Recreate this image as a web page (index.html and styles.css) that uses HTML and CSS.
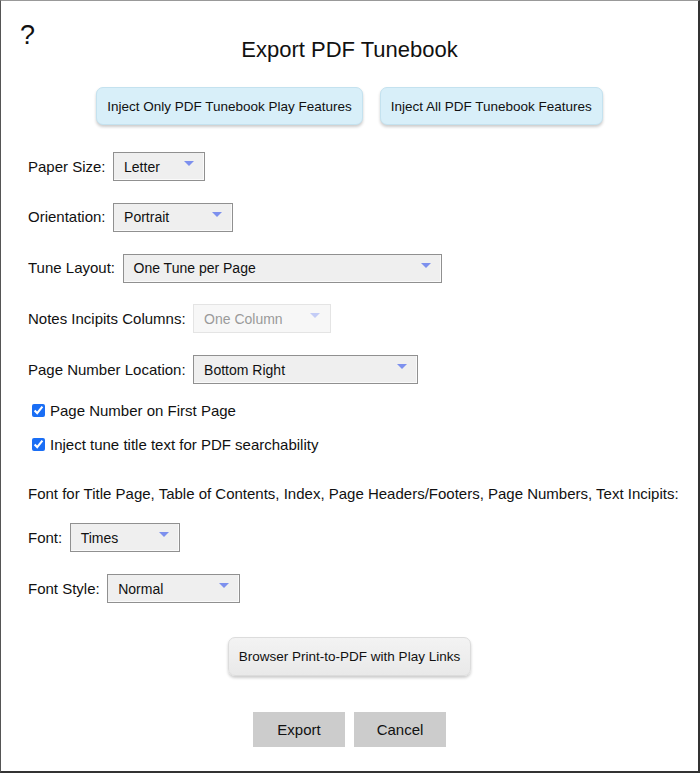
FILE: index.html
```html
<!DOCTYPE html>
<html>
<head>
<meta charset="utf-8">
<link rel="stylesheet" href="styles.css">
</head>
<body>
<div class="dialog">
  <div class="help">?</div>
  <h1 class="title">Export PDF Tunebook</h1>
  <div class="inject-row">
    <button class="btn-blue">Inject Only PDF Tunebook Play Features</button>
    <button class="btn-blue">Inject All PDF Tunebook Features</button>
  </div>

  <div class="fields">
    <div class="field">
      <span class="label">Paper Size:</span>
      <div class="select w-paper"><span>Letter</span><svg class="arrow" width="10" height="5" viewBox="0 0 10 5"><polygon points="0,0 10,0 5,5"/></svg></div>
    </div>
    <div class="field">
      <span class="label">Orientation:</span>
      <div class="select w-orient"><span>Portrait</span><svg class="arrow" width="10" height="5" viewBox="0 0 10 5"><polygon points="0,0 10,0 5,5"/></svg></div>
    </div>
    <div class="field">
      <span class="label">Tune Layout:</span>
      <div class="select w-layout"><span>One Tune per Page</span><svg class="arrow" width="10" height="5" viewBox="0 0 10 5"><polygon points="0,0 10,0 5,5"/></svg></div>
    </div>
    <div class="field">
      <span class="label">Notes Incipits Columns:</span>
      <div class="select disabled w-cols"><span>One Column</span><svg class="arrow" width="10" height="5" viewBox="0 0 10 5"><polygon points="0,0 10,0 5,5"/></svg></div>
    </div>
    <div class="field">
      <span class="label">Page Number Location:</span>
      <div class="select w-pnl"><span>Bottom Right</span><svg class="arrow" width="10" height="5" viewBox="0 0 10 5"><polygon points="0,0 10,0 5,5"/></svg></div>
    </div>
  </div>

  <label class="check first"><input type="checkbox" checked><span>Page Number on First Page</span></label>
  <label class="check second"><input type="checkbox" checked><span>Inject tune title text for PDF searchability</span></label>

  <p class="font-note">Font for Title Page, Table of Contents, Index, Page Headers/Footers, Page Numbers, Text Incipits:</p>

  <div class="field font-row">
    <span class="label">Font:</span>
    <div class="select w-font"><span>Times</span><svg class="arrow" width="10" height="5" viewBox="0 0 10 5"><polygon points="0,0 10,0 5,5"/></svg></div>
  </div>
  <div class="field style-row">
    <span class="label">Font Style:</span>
    <div class="select w-style"><span>Normal</span><svg class="arrow" width="10" height="5" viewBox="0 0 10 5"><polygon points="0,0 10,0 5,5"/></svg></div>
  </div>

  <div class="print-row">
    <button class="btn-gray">Browser Print-to-PDF with Play Links</button>
  </div>

  <div class="action-row">
    <button class="btn-action">Export</button>
    <button class="btn-action">Cancel</button>
  </div>
</div>
</body>
</html>
```
FILE: styles.css
```css
html, body {
  margin: 0;
  padding: 0;
  background: #fff;
}
body {
  font-family: "Liberation Sans", Arial, Helvetica, sans-serif;
  color: #111;
}
.dialog {
  position: relative;
  box-sizing: border-box;
  width: 700px;
  height: 773px;
  border-left: 1px solid #555;
  border-top: 1px solid #999;
  border-right: 2px solid #333;
  border-bottom: 2px solid #333;
  padding: 36px 0 0 27px;
}
.help {
  position: absolute;
  left: 19px;
  top: 19px;
  font-size: 27px;
  line-height: 31px;
  color: #111;
}
.title {
  margin: 0;
  font-size: 22px;
  line-height: 26px;
  font-weight: normal;
  text-align: center;
  margin-left: -27px;
  color: #111;
}
.inject-row {
  display: flex;
  justify-content: center;
  gap: 17px;
  margin: 24px 0 0 -27px;
}
.btn-blue {
  font-family: inherit;
  font-size: 13.5px;
  color: #111;
  height: 38px;
  padding: 0 10px;
  background: #d8eff9;
  border: 1px solid #c4e2ef;
  border-radius: 7px;
  box-shadow: 0 2px 3px rgba(0, 0, 0, 0.2);
}
.fields {
  display: flex;
  flex-direction: column;
  gap: 21.75px;
  margin-top: 27px;
}
.field {
  display: flex;
  align-items: center;
  gap: 7.5px;
  height: 29px;
}
.label {
  font-size: 15px;
  line-height: 20px;
}
.select {
  box-sizing: border-box;
  height: 29px;
  display: flex;
  align-items: center;
  justify-content: space-between;
  padding: 0 10px 0 10px;
  background: #efefef;
  border: 1px solid #909090;
  box-shadow: inset -1px -1px 0 #fafafa;
  font-size: 14px;
  color: #111;
}
.select .arrow {
  align-self: flex-start;
  margin-top: 8px;
  fill: #7d90ee;
}
.select.disabled {
  background: #f7f7f7;
  border-color: #e4e4e4;
  box-shadow: none;
  color: #9a9a9a;
}
.select.disabled .arrow {
  fill: #c3ccf6;
}
.w-paper { width: 92px; }
.w-orient { width: 120px; }
.w-layout { width: 319px; }
.w-cols { width: 138px; }
.w-pnl { width: 225px; }
.w-font { width: 110px; }
.w-style { width: 133px; }

.check {
  display: flex;
  align-items: center;
  height: 20px;
  font-size: 15px;
}
.check input {
  width: 13px;
  height: 13px;
  margin: 0 5px 0 4px;
  accent-color: #1a6ef5;
}
.check.first { margin-top: 16.5px; }
.check.second { margin-top: 14px; }

.font-note {
  margin: 29.5px 0 0 0;
  font-size: 15px;
  line-height: 20px;
  white-space: nowrap;
}
.font-row { margin-top: 19px; }
.style-row { margin-top: 22px; }

.print-row {
  display: flex;
  justify-content: center;
  margin: 34px 0 0 -27px;
}
.btn-gray {
  font-family: inherit;
  font-size: 13.5px;
  color: #111;
  height: 39px;
  padding: 0 10px;
  background: linear-gradient(#f3f3f3, #e9e9e9);
  border: 1px solid #dcdcdc;
  border-radius: 7px;
  box-shadow: 0 2px 3px rgba(0, 0, 0, 0.2);
}
.action-row {
  display: flex;
  justify-content: center;
  gap: 9px;
  margin: 36px 0 0 -27px;
}
.btn-action {
  font-family: inherit;
  font-size: 15px;
  color: #111;
  width: 92px;
  height: 35px;
  padding: 0;
  background: #cccccc;
  border: none;
  border-radius: 0;
}
```
